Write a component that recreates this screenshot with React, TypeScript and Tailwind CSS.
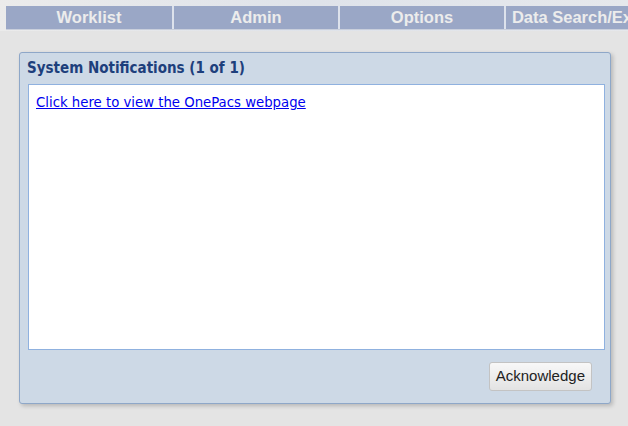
import React from 'react';

const tabs = ['Worklist', 'Admin', 'Options', 'Data Search/Export'];

const App: React.FC = () => {
  return (
    <div className="w-[628px] h-[426px] overflow-hidden bg-[#e4e4e4] relative" style={{ fontFamily: 'Tahoma, "DejaVu Sans", sans-serif' }}>
      {/* header strip */}
      <div className="h-[31px] bg-gradient-to-r from-[#ebebeb] via-[#dfe3ea] to-[#e6e8ec] pt-[6px] pl-[6px] overflow-hidden">
        <div className="flex h-[24px] bg-[#9aa7c6] border-b border-[#c9cfdc]">
          {tabs.map((t, i) => (
            <div
              key={t}
              className={`w-[166px] shrink-0 flex items-center justify-center text-[16.5px] font-bold text-[#ececec] whitespace-nowrap ${i > 0 ? 'border-l-2 border-[#dde2ec]' : ''}`}
              style={{ fontFamily: '"Liberation Sans", Arial, sans-serif' }}
            >
              {t}
            </div>
          ))}
        </div>
      </div>

      <div className="pt-[21px] pl-[19px]">
        <div className="w-[592px] h-[352px] bg-[#cdd9e6] border border-[#8ea7c8] rounded-[3px] shadow-[2px_2px_4px_rgba(0,0,0,0.2)] flex flex-col">
          <div className="h-[31px] flex items-center pl-[7px] text-[15px] font-bold text-[#1d3f7c]" style={{ fontFamily: '"DejaVu Sans Condensed", Tahoma, sans-serif' }}>
            System Notifications (1 of 1)
          </div>
          <div className="ml-[8px] mr-[5px] h-[266px] bg-white border border-[#8fb1df] pl-[7px] pt-[5px]">
            <a href="#" className="text-[14.75px] text-[#0000ee] underline" style={{ fontFamily: '"DejaVu Sans Condensed", Tahoma, sans-serif' }}>
              Click here to view the OnePacs webpage
            </a>
          </div>
          <div className="flex justify-end pr-[18px] pt-[12px]">
            <button
              className="h-[29px] px-[6px] border border-[#c3c3c3] rounded-[3px] bg-gradient-to-b from-[#f8f8f8] to-[#e3e3e3] text-[15px] text-[#222]"
              style={{ fontFamily: '"Liberation Sans", Arial, sans-serif' }}
            >
              Acknowledge
            </button>
          </div>
        </div>
      </div>
    </div>
  );
};

export default App;
